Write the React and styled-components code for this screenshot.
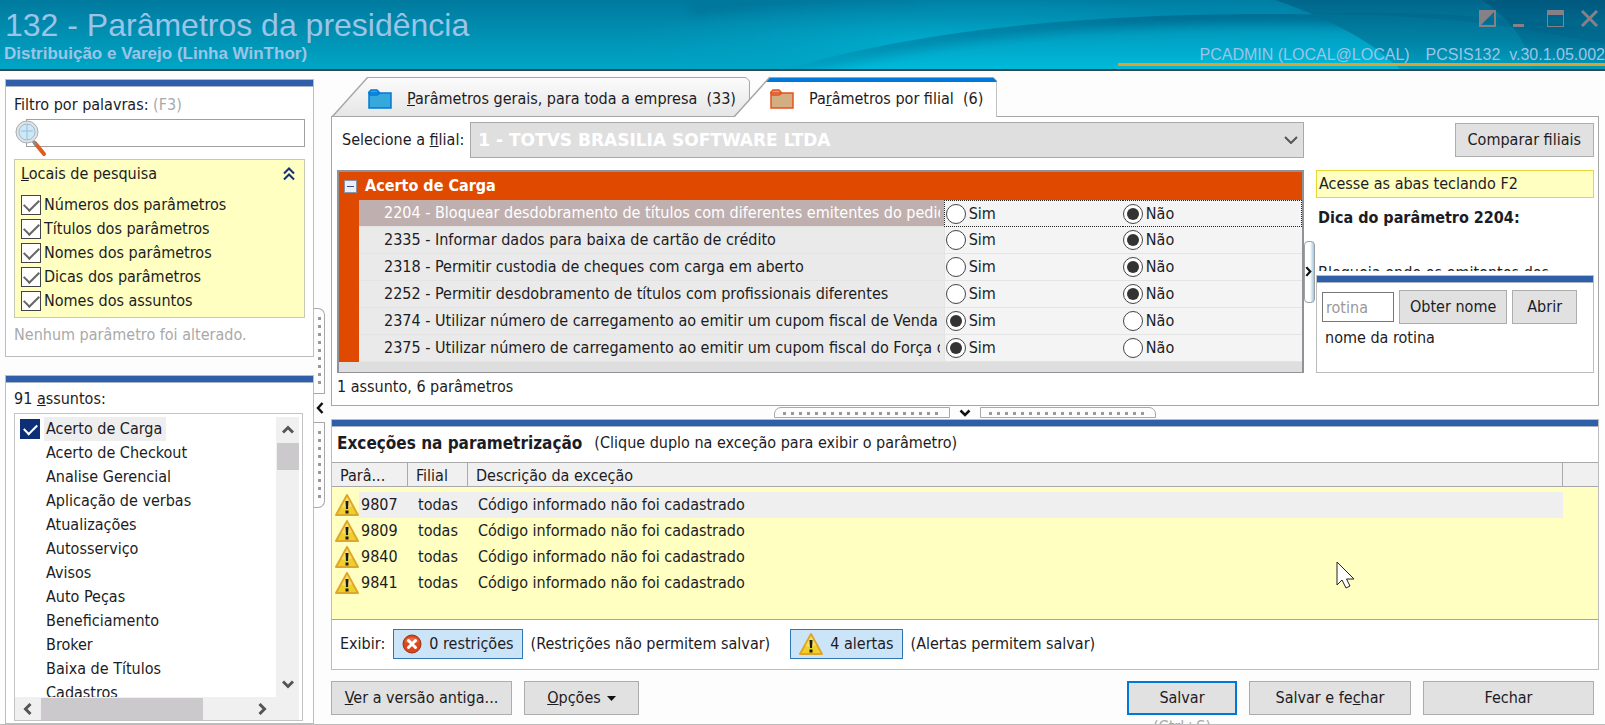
import React from 'react'
import styled, { createGlobalStyle, css } from 'styled-components'

const SEARCH_PLACES = [
  'Números dos parâmetros',
  'Títulos dos parâmetros',
  'Nomes dos parâmetros',
  'Dicas dos parâmetros',
  'Nomes dos assuntos',
]

const SUBJECTS = [
  'Acerto de Carga',
  'Acerto de Checkout',
  'Analise Gerencial',
  'Aplicação de verbas',
  'Atualizações',
  'Autosserviço',
  'Avisos',
  'Auto Peças',
  'Beneficiamento',
  'Broker',
  'Baixa de Títulos',
  'Cadastros',
]

const PARAMS = [
  { id: 2204, name: 'Bloquear desdobramento de títulos com diferentes emitentes do pedid', value: 'nao' },
  { id: 2335, name: 'Informar dados para baixa de cartão de crédito', value: 'nao' },
  { id: 2318, name: 'Permitir custodia de cheques com carga em aberto', value: 'nao' },
  { id: 2252, name: 'Permitir desdobramento de títulos com profissionais diferentes', value: 'nao' },
  { id: 2374, name: 'Utilizar número de carregamento ao emitir um cupom fiscal de Venda te', value: 'sim' },
  { id: 2375, name: 'Utilizar número de carregamento ao emitir um cupom fiscal do Força de', value: 'sim' },
]

const EXCEPTIONS = [9807, 9809, 9840, 9841]

function App() {
  return (
    <Window>
      <GlobalStyle />
      <TitleBar />
      <Body>
        <Sidebar>
          <SearchPanel />
          <SubjectsPanel />
        </Sidebar>
        <SideSplitter>
          <SideGrip $edge="top" />
          <ChevronSvg $w={8} $h={12} viewBox="0 0 8 12"><path d="M6.5 1 L2 6 L6.5 11" /></ChevronSvg>
          <SideGrip $edge="bottom" />
        </SideSplitter>
        <Main>
          <Tabs>
            <Tab type="button">
              <Folder stroke="#0078d7" fill="#35a8dc" />
              <span><u>P</u>arâmetros gerais, para toda a empresa&nbsp; (33)</span>
            </Tab>
            <Tab type="button" $active>
              <Folder stroke="#e8501e" fill="#d2ae80" />
              <span>Pa<u>r</u>âmetros por filial&nbsp; (6)</span>
            </Tab>
          </Tabs>
          <TabPage>
            <BranchRow>
              <label htmlFor="filial">Selecione a <u>f</u>ilial:</label>
              <SelectWrap>
                <Select id="filial" defaultValue="1">
                  <option value="1">1 - TOTVS BRASILIA SOFTWARE LTDA</option>
                </Select>
                <SelectArrow viewBox="0 0 14 8"><path d="M1 1 L7 7 L13 1" /></SelectArrow>
              </SelectWrap>
              <CompareButton type="button">Comparar filiais</CompareButton>
            </BranchRow>
            <ParamsRow>
              <ParamGrid />
              <TipSplitter>
                <TipHandle>
                  <ChevronSvg $w={7} $h={11} viewBox="0 0 8 12"><path d="M1.5 1 L6 6 L1.5 11" /></ChevronSvg>
                </TipHandle>
              </TipSplitter>
              <TipPanel />
            </ParamsRow>
            <Summary>1 assunto, 6 parâmetros</Summary>
          </TabPage>
          <MainSplitter>
            <MainGrip $edge="left" />
            <ChevronSvg $w={12} $h={8} viewBox="0 0 12 8"><path d="M1.5 1.5 L6 6 L10.5 1.5" /></ChevronSvg>
            <MainGrip $edge="right" />
          </MainSplitter>
          <ExceptionsPanel />
          <Footer />
        </Main>
      </Body>
    </Window>
  )
}

export default App

function TitleBar() {
  return (
    <Header>
      <HeaderArt viewBox="0 0 1605 69" preserveAspectRatio="none" aria-hidden="true">
        <defs>
          <linearGradient id="base" x1="0" y1="0" x2="0" y2="1">
            <stop offset="0" stopColor="#007a9f" />
            <stop offset="1" stopColor="#00a6c6" />
          </linearGradient>
          <radialGradient id="glow">
            <stop offset="0" stopColor="#00b4d4" stopOpacity="0.9" />
            <stop offset="1" stopColor="#00a0c4" stopOpacity="0" />
          </radialGradient>
          <linearGradient id="swell" x1="0" y1="0" x2="0" y2="1">
            <stop offset="0" stopColor="#008bb0" />
            <stop offset="1" stopColor="#00bada" />
          </linearGradient>
          <linearGradient id="crest" gradientUnits="userSpaceOnUse" x1="800" y1="0" x2="1160" y2="0">
            <stop offset="0" stopColor="#0086aa" stopOpacity="0.5" />
            <stop offset="1" stopColor="#006c92" />
          </linearGradient>
          <linearGradient id="deep" x1="0" y1="0" x2="0" y2="1">
            <stop offset="0" stopColor="#00587e" />
            <stop offset="0.6" stopColor="#007396" stopOpacity="0.95" />
            <stop offset="1" stopColor="#0084a6" stopOpacity="0.6" />
          </linearGradient>
          <linearGradient id="sheen" x1="0" y1="0" x2="0" y2="1">
            <stop offset="0" stopColor="#00a0c0" stopOpacity="0.2" />
            <stop offset="1" stopColor="#00a8c8" stopOpacity="0.35" />
          </linearGradient>
          <filter id="soft" x="-10%" y="-100%" width="120%" height="300%">
            <feGaussianBlur stdDeviation="6" />
          </filter>
          <clipPath id="swellClip">
            <path d="M785 69 C880 42 1020 14 1270 14 C1400 14 1500 24 1605 40 V69 Z" />
          </clipPath>
        </defs>
        <rect width="1605" height="69" fill="url(#base)" />
        <path d="M690 18 Q780 3 880 0 H690 Z" fill="#006c92" opacity="0.4" filter="url(#soft)" />
        <ellipse cx="960" cy="46" rx="340" ry="50" fill="url(#glow)" />
        <path d="M900 0 H1300 V20 H960 Z" fill="#0092b8" opacity="0.3" filter="url(#soft)" />
        <g clipPath="url(#swellClip)">
          <rect x="780" y="10" width="825" height="59" fill="url(#swell)" />
          <path
            d="M740 82 C880 42 1020 14 1270 14 C1400 14 1500 24 1605 40"
            fill="none"
            stroke="url(#crest)"
            strokeWidth="18"
            filter="url(#soft)"
          />
        </g>
        <path d="M1275 0 Q1335 20 1378 50 L1400 69 H1605 V0 Z" fill="url(#deep)" />
        <path d="M1275 0 Q1335 20 1378 50 L1400 69 H1532 Q1526 30 1482 0 Z" fill="url(#sheen)" />
        <path d="M1312 14 Q1420 14 1518 28 L1605 44 V30 Q1450 8 1312 14 Z" fill="#00587e" opacity="0.25" />
      </HeaderArt>
      <div>
        <Title>132 - Parâmetros da presidência</Title>
        <Subtitle>Distribuição e Varejo (Linha WinThor)</Subtitle>
      </div>
      <HeaderRight>
        <WindowButtons>
          <WindowButton type="button" aria-label="Alternar tema">
            <svg width="17" height="17" viewBox="0 0 17 17">
              <path d="M1 1 H16 V16 H1 Z" fill="none" stroke="#878087" strokeWidth="2" />
              <path d="M1 1 H16 L1 16 Z" fill="#878087" />
            </svg>
          </WindowButton>
          <WindowButton type="button" aria-label="Minimizar">
            <svg width="17" height="17" viewBox="0 0 17 17"><path d="M0 14 H11 V17 H0 Z" fill="#878087" /></svg>
          </WindowButton>
          <WindowButton type="button" aria-label="Maximizar">
            <svg width="17" height="17" viewBox="0 0 17 17">
              <path d="M0 0 H17 V17 H0 Z M1 5 V16 H16 V5 Z" fill="#878087" fillRule="evenodd" />
            </svg>
          </WindowButton>
          <WindowButton type="button" aria-label="Fechar janela">
            <svg width="17" height="17" viewBox="0 0 17 17"><path d="M1 1 L16 16 M16 1 L1 16" stroke="#878087" strokeWidth="3" /></svg>
          </WindowButton>
        </WindowButtons>
        <Session>
          <span>PCADMIN (LOCAL@LOCAL)</span>
          <span>PCSIS132&nbsp; v.30.1.05.002</span>
        </Session>
      </HeaderRight>
    </Header>
  )
}

function SearchPanel() {
  return (
    <SearchBox>
      <PanelBar />
      <SearchInner>
        <label htmlFor="filtro">Filtro por palavras: <Muted>(F3)</Muted></label>
        <SearchField>
          <SearchInput id="filtro" type="text" />
          <Lens viewBox="0 0 32 38">
            <path d="M20 24 L29 35" stroke="#e25a1c" strokeWidth="4" strokeLinecap="round" />
            <path d="M18 22 L21 26" stroke="#8a8a8a" strokeWidth="3" />
            <circle cx="12" cy="13" r="11" fill="#dfe3e6" stroke="#a9aeb2" />
            <circle cx="12" cy="13" r="8" fill="#cfe8f5" stroke="#a3bccb" />
            <path d="M12 5 V21 M6 12 H18" stroke="#8cc0de" />
          </Lens>
        </SearchField>
        <Places>
          <PlacesTitle>
            <span><u>L</u>ocais de pesquisa</span>
            <svg width="12" height="14" viewBox="0 0 12 14" fill="none" stroke="#13307a" strokeWidth="2">
              <path d="M1 6.5 L6 1.5 L11 6.5 M1 12.5 L6 7.5 L11 12.5" />
            </svg>
          </PlacesTitle>
          {SEARCH_PLACES.map((place) => (
            <CheckLabel key={place}>
              <Checkbox type="checkbox" defaultChecked />
              {place}
            </CheckLabel>
          ))}
        </Places>
        <Muted as="p">Nenhum parâmetro foi alterado.</Muted>
      </SearchInner>
    </SearchBox>
  )
}

function SubjectsPanel() {
  return (
    <SubjectsBox>
      <PanelBar />
      <SubjectsTitle>91 <u>a</u>ssuntos:</SubjectsTitle>
      <SubjectList>
        <SubjectItems>
          {SUBJECTS.map((subject, i) => (
            <li key={subject}>
              <Subject>
                <SubjectCheck type="checkbox" defaultChecked={i === 0} />
                <SubjectName $selected={i === 0}>{subject}</SubjectName>
              </Subject>
            </li>
          ))}
        </SubjectItems>
        <VScroll>
          <ScrollArrow viewBox="0 0 12 12"><path d="M1 8.5 L6 3.5 L11 8.5" /></ScrollArrow>
          <VThumb />
          <ScrollArrow viewBox="0 0 12 12"><path d="M1 3.5 L6 8.5 L11 3.5" /></ScrollArrow>
        </VScroll>
        <HScroll>
          <ScrollArrow viewBox="0 0 12 12"><path d="M8.5 1 L3.5 6 L8.5 11" /></ScrollArrow>
          <HThumb />
          <ScrollArrow viewBox="0 0 12 12"><path d="M3.5 1 L8.5 6 L3.5 11" /></ScrollArrow>
        </HScroll>
      </SubjectList>
    </SubjectsBox>
  )
}

function ParamGrid() {
  return (
    <GridFrame>
      <GridHead>
        <Collapse type="button" aria-label="Recolher" />
        Acerto de Carga
      </GridHead>
      <GridBody>
        <ParamTable>
          <ParamCols>
            <col />
            <col />
            <col />
          </ParamCols>
          <tbody>
            {PARAMS.map((param, i) => (
              <ParamLine key={param.id} $selected={i === 0}>
                <td><ParamName>{param.id} - {param.name}</ParamName></td>
                <td>
                  <RadioLabel>
                    <Radio type="radio" name={`p${param.id}`} defaultChecked={param.value === 'sim'} />
                    Sim
                  </RadioLabel>
                </td>
                <td>
                  <RadioLabel>
                    <Radio type="radio" name={`p${param.id}`} defaultChecked={param.value === 'nao'} />
                    Não
                  </RadioLabel>
                </td>
              </ParamLine>
            ))}
          </tbody>
        </ParamTable>
      </GridBody>
    </GridFrame>
  )
}

function TipPanel() {
  return (
    <TipColumn>
      <TipHint>Acesse as abas teclando F2</TipHint>
      <TipText>
        <b>Dica do parâmetro 2204:</b>
        <p>Bloqueia onde os emitentes dos</p>
      </TipText>
      <RoutineBox>
        <PanelBar />
        <RoutineRow>
          <RoutineInput type="text" placeholder="rotina" aria-label="rotina" />
          <Button type="button">Obter nome</Button>
          <OpenButton type="button">Abrir</OpenButton>
        </RoutineRow>
        <RoutineName>nome da rotina</RoutineName>
      </RoutineBox>
    </TipColumn>
  )
}

function ExceptionsPanel() {
  return (
    <ExceptionsBox>
      <PanelBar />
      <ExceptionsTitle>
        <b>Exceções na parametrização</b>
        <span>(Clique duplo na exceção para exibir o parâmetro)</span>
      </ExceptionsTitle>
      <ExceptionsArea>
        <ExceptionsTable>
          <ExceptionCols>
            <col />
            <col />
            <col />
            <col />
          </ExceptionCols>
          <thead>
            <tr>
              <th>Parâ...</th>
              <th>Filial</th>
              <th>Descrição da exceção</th>
              <th />
            </tr>
          </thead>
          <tbody>
            {EXCEPTIONS.map((id, i) => (
              <ExceptionLine key={id} $selected={i === 0}>
                <td><IdCell><Warning /><span>{id}</span></IdCell></td>
                <td>todas</td>
                <td>Código informado não foi cadastrado</td>
                <td />
              </ExceptionLine>
            ))}
          </tbody>
        </ExceptionsTable>
        <Cursor viewBox="0 0 19 29">
          <path d="M1 1 V24 L6 19 L10 27 L14 25 L10.5 18 H18 Z" fill="#fff" stroke="#222" />
        </Cursor>
      </ExceptionsArea>
      <ShowRow>
        <span>Exibir:</span>
        <Toggle type="button">
          <svg width="20" height="20" viewBox="0 0 20 20">
            <circle cx="10" cy="10" r="9" fill="#d9481c" stroke="#9c2f10" />
            <path d="M3 8 A7.5 7 0 0 1 17 8 Q10 11 3 8 Z" fill="#f08a60" opacity="0.6" />
            <path d="M6.5 6.5 L13.5 13.5 M13.5 6.5 L6.5 13.5" stroke="#fff" strokeWidth="3" strokeLinecap="round" />
          </svg>
          0 restrições
        </Toggle>
        <ToggleNote>(Restrições não permitem salvar)</ToggleNote>
        <Toggle type="button">
          <Warning />
          4 alertas
        </Toggle>
        <span>(Alertas permitem salvar)</span>
      </ShowRow>
    </ExceptionsBox>
  )
}

function Footer() {
  return (
    <FooterRow>
      <FooterButton type="button" $width={181}><span><u>V</u>er a versão antiga...</span></FooterButton>
      <FooterButton type="button" $width={115}>
        <span><u>O</u>pções</span>
        <svg width="9" height="5" viewBox="0 0 9 5"><path d="M0 0 H9 L4.5 5 Z" fill="#111" /></svg>
      </FooterButton>
      <Spacer />
      <SaveGroup>
        <FooterButton type="button" $width={110} $primary>Salvar</FooterButton>
        <Shortcut>(Ctrl+S)</Shortcut>
      </SaveGroup>
      <FooterButton type="button" $width={162}><span>Salvar e fe<u>c</u>har</span></FooterButton>
      <FooterButton type="button" $width={171}>Fechar</FooterButton>
    </FooterRow>
  )
}

function Folder({ stroke, fill }) {
  return (
    <svg width="24" height="20" viewBox="0 0 24 20" fill={fill} stroke={stroke} strokeWidth="1.5">
      <path d="M1 5 V3 L3 1 H9 L11 3 V5" />
      <path d="M1 4 H23 V19 H1 Z" />
      <path d="M1 6 H9 L12 4" fill="none" />
    </svg>
  )
}

function Warning() {
  return (
    <svg width="24" height="24" viewBox="0 0 24 24">
      <path d="M12 2 L23 22 H1 Z" fill="#efcf2a" stroke="#dfa62c" strokeWidth="2" strokeLinejoin="round" />
      <path d="M12 4 L17 13 Q12 16 6.5 14 Z" fill="#fbe98a" opacity="0.6" />
      <path d="M10.5 8 H13.5 L13 16 H11 Z M10.5 17.5 H13.5 V20.5 H10.5 Z" fill="#1b1b1b" />
    </svg>
  )
}

const GlobalStyle = createGlobalStyle`
  * {
    box-sizing: border-box;
  }

  body {
    margin: 0;
    background: #fdfdfd;
    color: #1c1c24;
    font-family: "DejaVu Sans Condensed", Tahoma, sans-serif;
    font-size: 16px;
    line-height: 24px;
    overflow: hidden;
  }

  button, input, select {
    font: inherit;
    color: inherit;
  }

  p, h1, h2 {
    margin: 0;
  }

  svg {
    flex: none;
  }
`

const Window = styled.div`
  height: 100vh;
  display: flex;
  flex-direction: column;
  border-bottom: 1px solid #bbb;
  white-space: nowrap;
`

const Header = styled.header`
  position: relative;
  display: flex;
  justify-content: space-between;
  border-bottom: 2px solid #2c4a56;
  font-family: "Liberation Sans", Arial, sans-serif;
  color: #9cc4e6;
`

const HeaderArt = styled.svg`
  position: absolute;
  inset: 0;
  width: 100%;
  height: 100%;
  z-index: -1;
`

const Title = styled.h1`
  padding: 6px 5px 0;
  font-size: 32px;
  line-height: 38px;
  font-weight: 400;
`

const Subtitle = styled.h2`
  padding: 0 4px 5px;
  font-size: 17px;
  line-height: 20px;
`

const HeaderRight = styled.div`
  display: flex;
  flex-direction: column;
  justify-content: space-between;
  align-items: flex-end;
  padding: 10px 0 3px;
`

const WindowButtons = styled.div`
  display: flex;
  gap: 17px;
  padding-right: 7px;
`

const WindowButton = styled.button`
  display: flex;
  padding: 0;
  border: 0;
  background: none;
`

const Session = styled.div`
  display: flex;
  justify-content: flex-end;
  gap: 16px;
  width: 487px;
  border-bottom: 3px solid #e2a02c;
  font-size: 16px;
  line-height: 17px;
`

const Body = styled.div`
  flex: 1;
  min-height: 0;
  display: flex;
`

const Sidebar = styled.aside`
  width: 314px;
  padding: 8px 0 0 5px;
  display: flex;
  flex-direction: column;
  gap: 18px;
`

const panel = css`
  border: 1px solid #bdbdbd;
  background: #fff;
`

const PanelBar = styled.div`
  height: 7px;
  background: #2f5fa9;
  border-bottom: 1px solid #a9b4c4;
`

const SearchBox = styled.section`
  ${panel}
`

const SearchInner = styled.div`
  padding: 6px 8px 9px;
`

const Muted = styled.span`
  color: #a9a9a9;
`

const SearchField = styled.div`
  position: relative;
  padding: 2px 0 12px 12px;
  display: flex;
`

const SearchInput = styled.input`
  width: 100%;
  height: 28px;
  border: 1px solid #a0a0a0;
`

const Lens = styled.svg`
  position: absolute;
  left: 1px;
  top: 2px;
  width: 32px;
  height: 38px;
`

const Places = styled.div`
  display: flex;
  flex-direction: column;
  padding: 2px 6px 4px;
  margin-bottom: 5px;
  border: 1px solid #c8c8b4;
  background: #ffffc1;
`

const PlacesTitle = styled.div`
  display: flex;
  justify-content: space-between;
  align-items: center;
  padding-right: 3px;
  margin-bottom: 7px;
`

const CheckLabel = styled.label`
  display: flex;
  align-items: center;
  gap: 3px;
`

const Checkbox = styled.input`
  appearance: none;
  flex: none;
  display: flex;
  justify-content: center;
  width: 20px;
  height: 20px;
  margin: 0;
  border: 1px solid #444;
  background: #fff;

  &:checked::after {
    content: '';
    width: 13px;
    height: 7px;
    margin-top: 3px;
    border-left: 2px solid #666;
    border-bottom: 2px solid #666;
    transform: rotate(-45deg);
  }
`

const SubjectsBox = styled.section`
  ${panel}
  flex: 1;
  min-height: 0;
  display: flex;
  flex-direction: column;
  padding-bottom: 2px;
`

const SubjectsTitle = styled.div`
  padding: 4px 8px 2px;
`

const SubjectList = styled.div`
  flex: 1;
  min-height: 0;
  margin: 0 10px 0 8px;
  border: 1px solid #c4c4c4;
  display: grid;
  grid-template-columns: 1fr 23px;
  grid-template-rows: 1fr 23px;
  padding: 3px 3px 0 0;
`

const SubjectItems = styled.ul`
  margin: 0;
  padding: 0 0 0 5px;
  list-style: none;
  overflow: hidden;
`

const Subject = styled.label`
  display: flex;
  align-items: center;
  gap: 4px;
`

const SubjectCheck = styled(Checkbox)`
  border-color: transparent;
  background: transparent;

  &:checked {
    background: #0c2f78;
  }

  &:checked::after {
    width: 11px;
    height: 6px;
    margin-top: 4px;
    border-color: #fff;
  }
`

const SubjectName = styled.span`
  padding: 0 4px 0 2px;
  background: ${ props => props.$selected ? '#eeeeee' : 'none' };
`

const VScroll = styled.div`
  display: flex;
  flex-direction: column;
  align-items: center;
  gap: 7px;
  padding: 7px 0;
  background: #f0f0f0;

  svg:last-child {
    margin-top: auto;
  }
`

const VThumb = styled.div`
  width: 22px;
  height: 27px;
  background: #cbc9cb;
`

const HScroll = styled.div`
  grid-column: 1 / 3;
  display: flex;
  align-items: center;
  padding: 0 31px 0 7px;
  gap: 7px;
  background: #f0f0f0;

  svg:last-child {
    margin-left: auto;
  }
`

const HThumb = styled.div`
  width: 162px;
  height: 22px;
  background: #cbc9cb;
`

const ScrollArrow = styled.svg`
  width: 12px;
  height: 12px;
  fill: none;
  stroke: #555;
  stroke-width: 3;
`

const ChevronSvg = styled.svg`
  width: ${ props => props.$w }px;
  height: ${ props => props.$h }px;
  fill: none;
  stroke: #111;
  stroke-width: 2.5;
`

const SideSplitter = styled.div`
  width: 17px;
  display: flex;
  flex-direction: column;
  align-items: flex-start;
  gap: 8px;
  padding-top: 237px;

  svg {
    margin-left: 2px;
  }
`

const SideGrip = styled.div`
  position: relative;
  width: 11px;
  height: 86px;
  border: 1px solid #a8a8a8;
  border-left: 0;
  border-radius: ${ props => props.$edge === 'top' ? '0 7px 0 0' : '0 0 7px 0' };

  &::after {
    content: '';
    position: absolute;
    inset: 8px 3px 8px 4px;
    background: repeating-linear-gradient(#999 0 3px, transparent 3px 8px);
  }
`

const Main = styled.main`
  flex: 1;
  min-width: 0;
  display: flex;
  flex-direction: column;
  padding: 6px 6px 0 0;
`

const Tabs = styled.div`
  position: relative;
  display: flex;
  margin-bottom: -1px;
`

const Tab = styled.button`
  position: relative;
  z-index: 0;
  display: flex;
  align-items: center;
  gap: 15px;
  height: 40px;
  padding: 4px 14px 0 37px;
  border: 0;
  background: #a6a6a6;
  clip-path: polygon(0 100%, 36px 0, calc(100% - 4px) 0, 100% 4px, 100% 100%);

  &::before {
    content: '';
    position: absolute;
    z-index: -1;
    inset: 0;
    background: ${ props => props.$active ? 'linear-gradient(#0078d7 0 5px, #fff 5px)' : 'linear-gradient(#fcfcfc, #e6e6e6 39px, #a6a6a6 39px)' };
    clip-path: polygon(2px 100%, 37px 1px, calc(100% - 4px) 1px, calc(100% - 1px) 4px, calc(100% - 1px) 100%);
  }

  & + & {
    margin-left: -17px;
  }
`

const TabPage = styled.section`
  ${panel}
  border-color: #a6a6a6;
  padding: 5px 4px 6px 5px;
`

const BranchRow = styled.div`
  display: flex;
  align-items: center;
  gap: 6px;
  padding-left: 5px;
`

const SelectWrap = styled.div`
  position: relative;
  flex: 1;
`

const Select = styled.select`
  appearance: none;
  display: block;
  width: 100%;
  height: 36px;
  padding: 0 7px;
  border: 1px solid #a9a9a9;
  border-radius: 0;
  background: #dfdfdf;
  color: #fff;
  font-family: "DejaVu Sans", Verdana, sans-serif;
  font-size: 17px;
  font-weight: 700;
`

const SelectArrow = styled.svg`
  position: absolute;
  right: 6px;
  top: 14px;
  width: 14px;
  height: 8px;
  fill: none;
  stroke: #555;
  stroke-width: 2;
`

const Button = styled.button`
  display: flex;
  align-items: center;
  justify-content: center;
  height: 34px;
  padding: 0 10px;
  border: 1px solid #adadad;
  background: #e1e1e1;
`

const OpenButton = styled(Button)`
  padding: 0 14px;
`

const CompareButton = styled(Button)`
  margin-left: 145px;
  padding: 0 12px;
`

const ParamsRow = styled.div`
  display: flex;
  margin-top: 12px;
  height: 203px;
`

const GridFrame = styled.div`
  flex: 1;
  min-width: 0;
  border: 2px solid #8f9297;
  border-bottom-width: 1px;
  background: #dedede;
`

const GridHead = styled.div`
  display: flex;
  align-items: center;
  gap: 8px;
  height: 28px;
  padding: 0 5px;
  background: #df4a00;
  color: #fff;
  font-weight: 700;
`

const Collapse = styled.button`
  width: 13px;
  height: 13px;
  padding: 0;
  border: 1px solid #8a94a6;
  background: linear-gradient(#3c5088, #3c5088) center / 7px 1px no-repeat, #eceff4;
`

const GridBody = styled.div`
  display: flex;
  border-left: 20px solid #df4a00;
  width: 100%;
`

const ParamTable = styled.table`
  width: 100%;
  table-layout: fixed;
  border-collapse: separate;
  border-spacing: 0;
`

const ParamCols = styled.colgroup`
  col:nth-child(1) {
    width: 62%;
  }

  col:nth-child(2) {
    width: 19%;
  }
`

const ParamLine = styled.tr`
  height: 27px;
  background: #f4f4f4;

  td {
    padding: 0;
    border-bottom: 1px solid #e4e4e4;
  }

  td:first-child {
    padding: 0 4px 0 25px;
    background: #eaeaea;
  }

  td:nth-child(2) {
    padding-left: 1px;
    border-left: 1px solid #e4e4e4;
  }

  ${ props => props.$selected && css`
    td:first-child {
      background: #bfb0af;
      color: #fff;
    }

    td:nth-child(2) {
      border: 1px dotted #222;
      border-right: 0;
    }

    td:nth-child(3) {
      border: 1px dotted #222;
      border-left: 0;
    }
  ` }
`

const ParamName = styled.div`
  overflow: hidden;
`

const RadioLabel = styled.label`
  display: flex;
  align-items: center;
  gap: 3px;
`

const Radio = styled.input`
  appearance: none;
  flex: none;
  display: flex;
  align-items: center;
  justify-content: center;
  width: 20px;
  height: 20px;
  margin: 0;
  border: 1px solid #444;
  border-radius: 50%;
  background: #fff;

  &:checked::after {
    content: '';
    width: 12px;
    height: 12px;
    border-radius: 50%;
    background: #333;
  }
`

const TipSplitter = styled.div`
  width: 12px;
  display: flex;
  align-items: center;
`

const TipHandle = styled.div`
  display: flex;
  align-items: center;
  width: 11px;
  height: 62px;
  border: 1px solid #a0a0a0;
  border-radius: 4px;
  background: linear-gradient(90deg, #fff 55%, #9cc8e4);
`

const TipColumn = styled.div`
  display: flex;
  flex-direction: column;
  width: 278px;
`

const TipHint = styled.div`
  padding: 1px 2px;
  border: 1px solid #e8d634;
  background: #ffffc1;
`

const TipText = styled.div`
  flex: 1;
  min-height: 0;
  overflow: hidden;
  padding: 8px 2px 0;

  p {
    padding-top: 31px;
  }
`

const RoutineBox = styled.div`
  ${panel}
  margin-top: 4px;
`

const RoutineRow = styled.div`
  display: flex;
  align-items: center;
  gap: 5px;
  padding: 7px 5px 2px;
`

const RoutineInput = styled.input`
  width: 72px;
  height: 30px;
  padding: 0 3px;
  border: 1px solid #777;

  &::placeholder {
    color: #999;
  }
`

const RoutineName = styled.p`
  padding: 0 8px 22px;
`

const Summary = styled.p`
  padding-top: 2px;
`

const MainSplitter = styled.div`
  display: flex;
  justify-content: center;
  align-items: center;
  gap: 9px;
  height: 13px;
`

const MainGrip = styled.div`
  position: relative;
  width: 176px;
  height: 11px;
  border: 1px solid #a8a8a8;
  border-radius: ${ props => props.$edge === 'left' ? '7px 0 0 0' : '0 7px 0 0' };

  &::after {
    content: '';
    position: absolute;
    inset: 4px 8px 2px;
    background: repeating-linear-gradient(90deg, #999 0 3px, transparent 3px 8px);
  }
`

const ExceptionsBox = styled.section`
  ${panel}
  flex: 1;
  min-height: 0;
  display: flex;
  flex-direction: column;
`

const ExceptionsTitle = styled.div`
  display: flex;
  gap: 12px;
  padding: 4px 5px 7px;

  b {
    font-size: 17px;
  }
`

const ExceptionsArea = styled.div`
  position: relative;
  flex: 1;
  min-height: 0;
  background: #ffffc1;
  border-bottom: 1px solid #a6a6a6;
`

const ExceptionsTable = styled.table`
  width: 100%;
  table-layout: fixed;
  border-collapse: separate;
  border-spacing: 0;

  th {
    height: 25px;
    padding: 3px 8px 0;
    border: solid #a9a9a9;
    border-width: 1px 1px 1px 0;
    background: #f0f0f0;
    font-weight: 400;
    line-height: 20px;
    text-align: left;
  }

  th:last-child {
    border-right: 0;
  }

  td {
    padding: 0 10px;
  }

  tbody::before {
    content: '';
    display: block;
    height: 5px;
  }
`

const ExceptionCols = styled.colgroup`
  col:nth-child(1) {
    width: 76px;
  }

  col:nth-child(2) {
    width: 60px;
  }

  col:nth-child(4) {
    width: 35px;
  }
`

const ExceptionLine = styled.tr`
  height: 26px;

  td:first-child {
    padding: 0 0 0 3px;
  }

  ${ props => props.$selected && css`
    td:not(:last-child) {
      background: #efefef;
    }

    td:first-child {
      background: linear-gradient(90deg, transparent 27px, #efefef 27px);
    }
  ` }
`

const IdCell = styled.div`
  display: flex;
  align-items: center;
  gap: 2px;
`

const Cursor = styled.svg`
  position: absolute;
  right: 243px;
  top: 99px;
  width: 19px;
  height: 29px;
`

const ShowRow = styled.div`
  display: flex;
  align-items: center;
  gap: 8px;
  height: 49px;
  padding: 0 8px 2px;
`

const Toggle = styled.button`
  display: flex;
  align-items: center;
  gap: 7px;
  height: 30px;
  padding: 0 8px;
  border: 1px solid #2f78b4;
  background: #cce4f7;
`

const ToggleNote = styled.span`
  margin-right: 12px;
`

const FooterRow = styled.footer`
  display: flex;
  gap: 12px;
  height: 54px;
  padding: 11px 5px 0 0;
  overflow: hidden;
`

const FooterButton = styled(Button)`
  flex: none;
  gap: 6px;
  width: ${ props => props.$width }px;
  border: ${ props => props.$primary ? '2px solid #0078d7' : '1px solid #adadad' };
`

const Spacer = styled.div`
  flex: 1;
`

const SaveGroup = styled.div`
  display: flex;
  flex-direction: column;
`

const Shortcut = styled.span`
  color: #a9a9a9;
  text-align: center;
`
